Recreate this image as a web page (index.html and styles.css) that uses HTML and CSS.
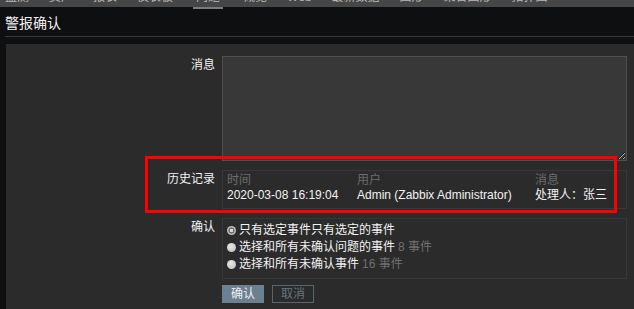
FILE: index.html
```html
<!DOCTYPE html>
<html>
<head>
  <meta charset="utf-8" />
  <title>警报确认</title>
  <link rel="stylesheet" href="styles.css">
</head>
<body>
  <div class="topnav">
    <span class="nav-item">监测</span>
    <span class="nav-item">资产</span>
    <span class="nav-item">报表</span>
    <span class="nav-item">仪表板</span>
    <span class="nav-item active">问题</span>
    <span class="nav-item">概览</span>
    <span class="nav-item">Web</span>
    <span class="nav-item">最新数据</span>
    <span class="nav-item">图形</span>
    <span class="nav-item">聚合图形</span>
    <span class="nav-item">拓扑图</span>
  </div>

  <div class="header">
    <h1>警报确认</h1>
  </div>

  <div class="panel">
    <form class="form-list">
      <div class="form-row">
        <label class="form-label" for="message">消息</label>
        <textarea id="message" class="message-box"></textarea>
      </div>

      <div class="form-row">
        <div class="form-label">历史记录</div>
        <div class="history">
          <div class="history-row history-head">
            <span class="col-time">时间</span>
            <span class="col-user">用户</span>
            <span class="col-msg">消息</span>
          </div>
          <div class="history-row">
            <span class="col-time">2020-03-08 16:19:04</span>
            <span class="col-user">Admin (Zabbix Administrator)</span>
            <span class="col-msg">处理人：张三</span>
          </div>
        </div>
      </div>

      <div class="form-row form-row-tight">
        <div class="form-label">确认</div>
        <div class="radio-list">
          <label class="radio-item"><span class="radio checked"></span>只有选定事件只有选定的事件</label>
          <label class="radio-item"><span class="radio"></span>选择和所有未确认问题的事件<span class="count">8 事件</span></label>
          <label class="radio-item"><span class="radio"></span>选择和所有未确认事件<span class="count">16 事件</span></label>
        </div>
      </div>

      <div class="form-row">
        <div class="form-label"></div>
        <div class="buttons">
          <button type="button" class="btn-main">确认</button>
          <button type="button" class="btn-alt">取消</button>
        </div>
      </div>
    </form>
    <div class="highlight"></div>
  </div>
</body>
</html>
```

FILE: styles.css
```css
body {
  display: flex;
  flex-direction: column;
  height: 100vh;
  margin: 0;
  background-color: #0e0f11;
  font-family: "Liberation Sans", "Noto Sans CJK SC", sans-serif;
  font-size: 12px;
  color: #f2f2f2;
  overflow: hidden;
}
.topnav {
  display: flex;
  gap: 20px;
  padding-left: 5px;
  height: 9px;
  flex-shrink: 0;
  background: linear-gradient(#464646 0, #464646 7px, transparent 7px);
}
.nav-item {
  height: 7px;
  overflow: hidden;
  line-height: 16px;
  color: #b8b8b8;
}
.nav-item::before {
  content: "";
  display: block;
  margin-top: -11px;
}
.nav-item.active {
  height: 9px;
  padding: 0 3px;
  box-shadow: inset 0 -2px #7b7b7b;
}
.header {
  padding-left: 5px;
  flex-shrink: 0;
}
h1 {
  margin: 4px 0 0;
  padding-bottom: 3px;
  font-size: 14px;
  font-weight: normal;
  line-height: 20px;
  border-bottom: 1px solid #393939;
}
.panel {
  position: relative;
  flex: 1;
  margin: 7px 0 0 6px;
  padding-top: 12px;
  background: #2b2b2b;
}
.form-row {
  display: flex;
  gap: 7px;
  margin-bottom: 9px;
}
.form-row-tight {
  margin-bottom: 6px;
}
.form-label {
  width: 209px;
  padding-top: 1px;
  text-align: right;
  line-height: 16px;
}
.message-box {
  display: block;
  box-sizing: border-box;
  width: 405px;
  height: 105px;
  margin: 0;
  background: #383838;
  border: 1px solid #4f4f4f;
  color: #f2f2f2;
}
.history {
  box-sizing: border-box;
  width: 405px;
  height: 39px;
  padding: 2px 4px 0;
  border: 1px solid #383838;
}
.history-row {
  display: flex;
  line-height: 15px;
}
.history-head {
  color: #6c6c6c;
}
.col-time {
  width: 130px;
}
.col-user {
  width: 178px;
}
.radio-list {
  box-sizing: border-box;
  width: 405px;
  height: 61px;
  padding: 3px 4px 0;
  border: 1px solid #383838;
}
.radio-item {
  display: flex;
  align-items: center;
  line-height: 17px;
}
.radio {
  width: 9px;
  height: 9px;
  margin-right: 3px;
  border-radius: 50%;
  background: radial-gradient(circle at 40% 35%, #e6e6e6, #bdbdbd);
}
.radio.checked {
  background: radial-gradient(circle, #d8d8d8 0, #d8d8d8 1.5px, #6e6e6e 2px, #6e6e6e 2.8px, #bcbcbc 3.3px);
}
.count {
  margin-left: 3px;
  color: #707070;
}
.buttons {
  display: flex;
  gap: 8px;
}
.btn-main,
.btn-alt {
  box-sizing: border-box;
  width: 42px;
  height: 18px;
  padding: 0;
  font-family: inherit;
  font-size: 12px;
  line-height: 16px;
  cursor: pointer;
}
.btn-main {
  background: #6b8090;
  border: 1px solid #6b8090;
  color: #eef1f3;
}
.btn-alt {
  background: transparent;
  border: 1px solid #56666f;
  color: #65777f;
}
.highlight {
  position: absolute;
  left: 139px;
  top: 112px;
  width: 472px;
  height: 57px;
  box-sizing: border-box;
  border: 3px solid #ff0000;
  pointer-events: none;
}
```
